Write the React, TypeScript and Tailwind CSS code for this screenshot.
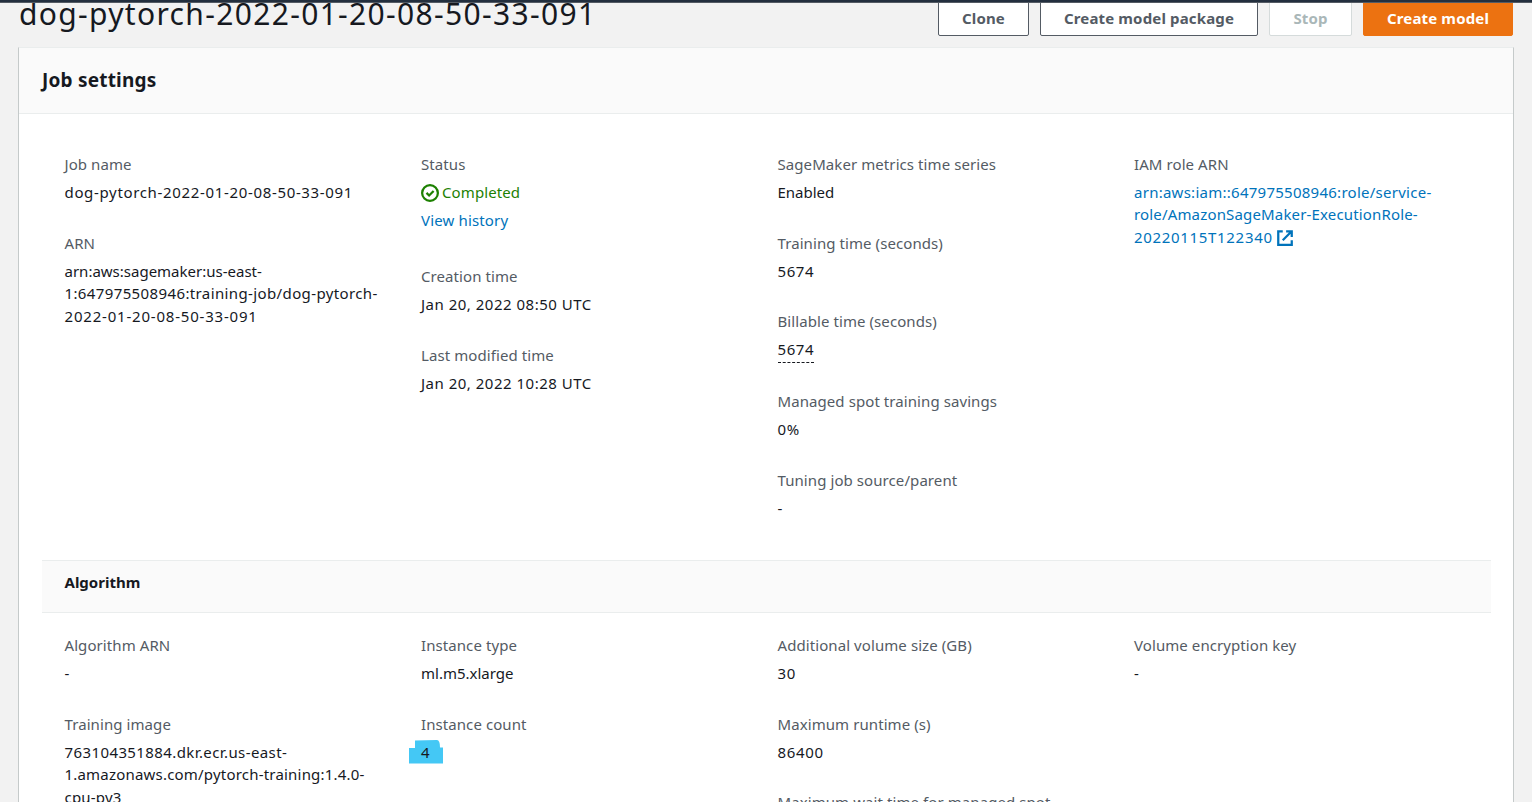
import type { ReactNode } from "react";

function CheckCircle() {
  return (
    <svg width="18" height="18" viewBox="0 0 16 16" fill="none" stroke="#1d8102" strokeWidth="2" className="relative top-[0.5px] mr-[3px] shrink-0">
      <circle cx="8" cy="8" r="7" />
      <path d="M4.9 7.9 7.2 10.2 11.2 6.2" />
    </svg>
  );
}

function ExternalIcon() {
  return (
    <svg width="18" height="18" viewBox="0 0 16 16" fill="none" stroke="#0073bb" strokeWidth="2" className="ml-[3px] inline-block align-[-4px]">
      <path d="M6 2H2v12h12v-4M9 2h5v5M6 10 13.5 2.5" />
    </svg>
  );
}

function Field({ label, children }: { label: string; children?: ReactNode }) {
  return (
    <div className="flex flex-col gap-[5.55px]">
      <div className="tracking-[0.08px] whitespace-nowrap text-[#545b64]">{label}</div>
      {children}
    </div>
  );
}

function Column({ children }: { children: ReactNode }) {
  return <div className="flex w-[356.5px] shrink-0 flex-col gap-[28.1px]">{children}</div>;
}

const button = "flex h-[36px] shrink-0 items-center justify-center rounded-[2px] border text-[15px] font-bold tracking-[0.15px] whitespace-nowrap";

export default function App() {
  return (
    <div className="h-[802px] w-[1532px] overflow-hidden bg-[#f2f2f2] font-['Noto_Sans',sans-serif] text-[15px] leading-[22.5px] text-[#16191f]">
      <div className="h-[3px] border-b border-[#545b64] bg-[#232f3e]" />
      <div className="flex h-[44px] items-start justify-between overflow-hidden px-[19px]">
        <h1 className="-mt-[9px] text-[30px] leading-[40px] tracking-[1.33px] whitespace-nowrap">dog-pytorch-2022-01-20-08-50-33-091</h1>
        <div className="-mt-[3px] flex gap-[11px]">
          <button className={`${button} w-[91px] border-[#545b64] bg-white text-[#545b64]`}>Clone</button>
          <button className={`${button} w-[218px] border-[#545b64] bg-white text-[#545b64]`}>Create model package</button>
          <button className={`${button} w-[83px] border-[#d5dbdb] bg-white text-[#aab7b8]`}>Stop</button>
          <button className={`${button} w-[150px] border-[#ec7211] bg-[#ec7211] text-white`}>Create model</button>
        </div>
      </div>
      <main className="mx-[18px] h-[800px] border border-t-[#eaeded] border-r-[#c5caca] border-l-[#c5caca] bg-white">
        <header className="flex h-[66px] items-center border-b border-[#eaeded] bg-[#fafafa] pl-[23px]">
          <h2 className="text-[19px] font-bold tracking-[0.2px]">Job settings</h2>
        </header>
        <section className="flex h-[446px] pt-[39px] pl-[45.5px]">
          <Column>
            <Field label="Job name">
              <div className="tracking-[0.66px]">dog-pytorch-2022-01-20-08-50-33-091</div>
            </Field>
            <Field label="ARN">
              <div className="whitespace-nowrap">
                <div>arn:aws:sagemaker:us-east-</div>
                <div className="tracking-[0.38px]">1:647975508946:training-job/dog-pytorch-</div>
                <div className="tracking-[0.8px]">2022-01-20-08-50-33-091</div>
              </div>
            </Field>
          </Column>
          <Column>
            <Field label="Status">
              <div className="flex items-center tracking-[0.1px] text-[#1d8102]"><CheckCircle /><span>Completed</span></div>
              <a className="mb-[5.6px] tracking-[0.15px] text-[#0073bb]">View history</a>
            </Field>
            <Field label="Creation time"><div className="tracking-[0.5px]">Jan 20, 2022 08:50 UTC</div></Field>
            <Field label="Last modified time"><div className="tracking-[0.5px]">Jan 20, 2022 10:28 UTC</div></Field>
          </Column>
          <Column>
            <Field label="SageMaker metrics time series"><div>Enabled</div></Field>
            <Field label="Training time (seconds)"><div className="tracking-[0.6px]">5674</div></Field>
            <Field label="Billable time (seconds)">
              <div className="-mb-px self-start border-b border-dashed border-[#16191f] pb-px tracking-[0.6px]">5674</div>
            </Field>
            <Field label="Managed spot training savings"><div className="tracking-[0.6px]">0%</div></Field>
            <Field label="Tuning job source/parent"><div>-</div></Field>
          </Column>
          <Column>
            <Field label="IAM role ARN">
              <a className="-mt-[0.1px] whitespace-nowrap text-[#0073bb]">
                <div className="tracking-[0.26px]">arn:aws:iam::647975508946:role/service-</div>
                <div className="tracking-[0.16px]">role/AmazonSageMaker-ExecutionRole-</div>
                <div className="h-[22.5px] tracking-[0.68px]">20220115T122340<ExternalIcon /></div>
              </a>
            </Field>
          </Column>
        </section>
        <header className="mr-[22px] ml-[23px] h-[53px] border-y border-[#eaeded] bg-[#fafafa] pt-[10px] pl-[22.5px]">
          <h3 className="font-bold">Algorithm</h3>
        </header>
        <section className="flex pt-[21.3px] pl-[45.5px]">
          <Column>
            <Field label="Algorithm ARN"><div>-</div></Field>
            <Field label="Training image">
              <div className="whitespace-nowrap">
                <div className="tracking-[0.4px]">763104351884.dkr.ecr.us-east-</div>
                <div className="tracking-[0.2px]">1.amazonaws.com/pytorch-training:1.4.0-</div>
                <div className="tracking-[0.2px]">cpu-py3</div>
              </div>
            </Field>
          </Column>
          <Column>
            <Field label="Instance type"><div>ml.m5.xlarge</div></Field>
            <Field label="Instance count">
              <div className="relative">
                <svg width="34" height="24" viewBox="0 0 34 24" className="absolute -top-[1px] -left-[12px]">
                  <path d="M6 .5 28 0q3 0 3 7.500h3v16H0V8h6z" fill="#44c8f5" />
                </svg>
                <span className="relative">4</span>
              </div>
            </Field>
          </Column>
          <Column>
            <Field label="Additional volume size (GB)"><div className="tracking-[0.6px]">30</div></Field>
            <Field label="Maximum runtime (s)"><div className="tracking-[0.7px]">86400</div></Field>
            <div className="-mt-px">
              <Field label="Maximum wait time for managed spot" />
            </div>
          </Column>
          <Column>
            <Field label="Volume encryption key"><div>-</div></Field>
          </Column>
        </section>
      </main>
    </div>
  );
}
